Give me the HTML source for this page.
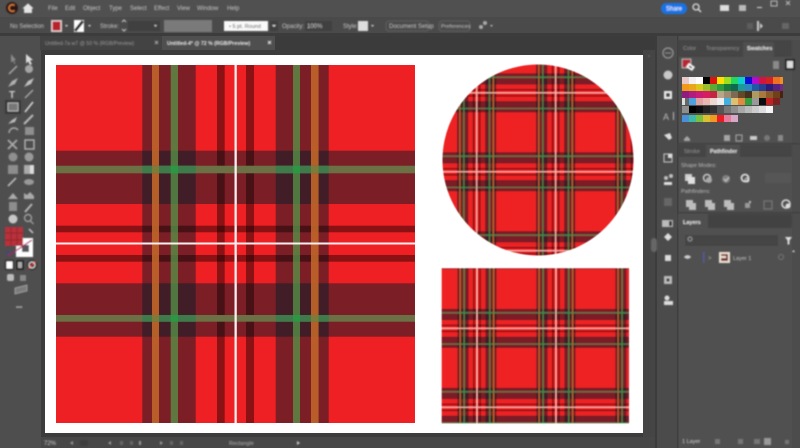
<!DOCTYPE html>
<html><head><meta charset="utf-8"><style>
html,body{margin:0;padding:0;background:#4a4a4a;width:800px;height:448px;overflow:hidden}
svg{display:block}
text{font-family:"Liberation Sans",sans-serif;font-size:6px;fill:#c8c8c8}
</style></head><body>
<svg width="800" height="448" viewBox="0 0 800 448" xmlns="http://www.w3.org/2000/svg">
<defs>
<filter id="b" x="-5%" y="-5%" width="110%" height="110%"><feGaussianBlur stdDeviation="0.7"/></filter>
<filter id="b2" x="-5%" y="-5%" width="110%" height="110%"><feGaussianBlur stdDeviation="0.35"/></filter>
<filter id="b3" x="-5%" y="-5%" width="110%" height="110%"><feGaussianBlur stdDeviation="0.6"/></filter>
<g id="t">
<rect x="47.5" y="55.5" width="376" height="376" fill="#ee2024"/>
<g fill="rgb(0,29,42)" fill-opacity=".48">
<rect x="47.5" y="150.7" width="376" height="53.3"/><rect x="47.5" y="283.3" width="376" height="53.4"/>
<rect x="142.3" y="55.5" width="53.4" height="376"/><rect x="275.7" y="55.5" width="53" height="376"/>
</g>
<g fill="#000" fill-opacity=".42">
<rect x="217" y="55.5" width="7.7" height="376"/><rect x="246" y="55.5" width="8" height="376"/>
<rect x="47.5" y="225.7" width="376" height="6.6"/><rect x="47.5" y="255" width="376" height="6.7"/>
</g>
<g fill="rgb(87,150,73)" fill-opacity=".75">
<rect x="170.7" y="55.5" width="7.3" height="376"/><rect x="293" y="55.5" width="7" height="376"/>
</g>
<g fill="rgb(190,100,40)" fill-opacity=".92">
<rect x="152" y="55.5" width="7" height="376"/><rect x="311" y="55.5" width="7.6" height="376"/>
</g>
<g fill="#6b7045">
<rect x="47.5" y="165.7" width="376" height="7.6"/><rect x="47.5" y="315" width="376" height="6.7"/>
</g>
<g fill="#3f7a4a">
<rect x="142.3" y="165.7" width="53.4" height="7.6"/><rect x="275.7" y="165.7" width="53" height="7.6"/>
<rect x="142.3" y="315" width="53.4" height="6.7"/><rect x="275.7" y="315" width="53" height="6.7"/>
</g>
<g fill="#7f7a3a">
<rect x="152" y="165.7" width="7" height="7.6"/><rect x="311" y="165.7" width="7.6" height="7.6"/>
<rect x="152" y="315" width="7" height="6.7"/><rect x="311" y="315" width="7.6" height="6.7"/>
</g>
<g fill="#2c9644">
<rect x="170.7" y="165.7" width="7.3" height="7.6"/><rect x="293" y="165.7" width="7" height="7.6"/>
<rect x="170.7" y="315" width="7.3" height="6.7"/><rect x="293" y="315" width="7" height="6.7"/>
</g>
</g>
<g id="tl">
<use href="#t"/>
<rect x="233" y="55.5" width="5" height="376" fill="#f6c2ba"/>
<rect x="47.5" y="241" width="376" height="5" fill="#f6c2ba"/>
</g>
<pattern id="p1" patternUnits="userSpaceOnUse" x="0" y="0" width="376" height="376" patternTransform="translate(437.2 132.26) scale(.21)"><g transform="translate(-47.5 -55.5)"><use href="#tl"/></g></pattern>
<pattern id="p2" patternUnits="userSpaceOnUse" x="0" y="0" width="376" height="376" patternTransform="translate(437.5 288.86) scale(.21)"><g transform="translate(-47.5 -55.5)"><use href="#tl"/></g></pattern>
<clipPath id="cm"><rect x="56" y="65" width="359" height="358"/></clipPath>
</defs>

<!-- chrome -->
<rect width="800" height="448" fill="#4a4a4a"/>
<rect x="0" y="0" width="800" height="17" fill="#505050"/>
<rect x="0" y="17" width="800" height="18" fill="#4a4a4a"/>
<rect x="0" y="33" width="800" height="3" fill="#3c3c3c"/>
<rect x="41" y="36" width="614" height="401" fill="#3c3c3c"/>
<rect x="0" y="36" width="41" height="412" fill="#4e4e4e"/>
<rect x="41" y="36" width="614" height="14" fill="#3b3b3b"/>
<rect x="162" y="36" width="113" height="14" fill="#4f4f4f"/>
<rect x="40" y="36" width="122" height="14" fill="#434343"/>
<rect x="41" y="437" width="614" height="11" fill="#474747"/>
<rect x="643" y="50" width="12" height="387" fill="#454545"/>
<rect x="655" y="36" width="23" height="412" fill="#4b4b4b"/>
<rect x="678" y="36" width="122" height="412" fill="#505050"/>
<rect x="655" y="36" width="2" height="412" fill="#3c3c3c"/>
<rect x="677" y="36" width="1.5" height="412" fill="#3e3e3e"/>
<rect x="792" y="40" width="8" height="408" fill="#4c4c4c"/>

<!-- artboard -->
<rect x="45" y="55" width="598" height="378" fill="#fff"/>
<g clip-path="url(#cm)">
<use href="#t"/>
<rect x="234.5" y="55" width="2.3" height="376" fill="#fbeeee"/>
<rect x="47" y="242.5" width="376" height="2" fill="#fbeeee"/>
</g>
<circle cx="538" cy="160" r="95.5" fill="url(#p1)" filter="url(#b3)"/>
<rect x="441.7" y="268.3" width="187.3" height="155" fill="url(#p2)" filter="url(#b3)"/>

<!-- UI -->
<g filter="url(#b)">
<!-- title bar -->
<circle cx="12" cy="8" r="6" fill="#2a1512"/><path d="M14.5 5.5a3.3 3.3 0 1 0 0 5" fill="none" stroke="#e8833a" stroke-width="1.3"/>
<path d="M23 8.5l5-4.5 5 4.5M24.5 8v4.5h7V8z" fill="#e4e4e4" stroke="#e4e4e4" stroke-width=".9"/>
<text x="48" y="10">File</text><text x="65" y="10">Edit</text><text x="83" y="10">Object</text><text x="109" y="10">Type</text><text x="130" y="10">Select</text><text x="154" y="10">Effect</text><text x="177" y="10">View</text><text x="197" y="10">Window</text><text x="227" y="10">Help</text>
<rect x="661" y="3" width="26" height="11" rx="5.5" fill="#1473e6"/><text x="666" y="10.5" fill="#fff" style="fill:#fff">Share</text>
<circle cx="696" cy="7" r="3" fill="none" stroke="#ddd" stroke-width="1.3"/><path d="M698 9l3 3" stroke="#ddd" stroke-width="1.4"/>
<rect x="720" y="5" width="9" height="6" fill="#ddd"/><rect x="739" y="5" width="7" height="6" fill="#bbb"/><rect x="757" y="7" width="5" height="1" fill="#ddd"/><rect x="771" y="1" width="6" height="5" fill="none" stroke="#bbb"/><path d="M786 1l4 4m0-4l-4 4" stroke="#bbb"/>

<!-- control bar -->
<text x="10" y="28">No Selection</text>
<rect x="51" y="20" width="11" height="12" fill="#e9d4d4"/><rect x="52.5" y="21.5" width="8" height="9" fill="#b8222c"/>
<path d="M65 25h3l-1.500 2z" fill="#ddd"/>
<rect x="74" y="20" width="10" height="12" fill="#fff"/><path d="M75 31l8-10" stroke="#222" stroke-width="3"/>
<path d="M88 25h3l-1.500 2z" fill="#ddd"/>
<text x="100" y="28">Stroke:</text>
<rect x="128" y="21" width="32" height="10" fill="#404040"/>
<path d="M154 25h3l-1.500 2z" fill="#ccc"/>
<path d="M122 22l2-2 2 2M122 29l2 2 2-2" stroke="#ccc" fill="none"/>
<rect x="164" y="20" width="48" height="12" fill="#7a7a7a"/>
<rect x="224" y="21" width="44" height="10" fill="#fafafa"/><text x="229" y="28" style="fill:#333;font-size:5.500px">• 5 pt. Round</text>
<rect x="270" y="21" width="8" height="10" fill="#3f3f3f"/><path d="M272 25h4l-2 2z" fill="#ddd"/>
<text x="282" y="28">Opacity:</text><rect x="305" y="21" width="27" height="10" fill="#404040"/><text x="307" y="28">100%</text>
<text x="343" y="28">Style:</text><rect x="358" y="21" width="10" height="10" fill="#dedede"/><path d="M371 25h3l-1.500 2z" fill="#ddd"/>
<rect x="386" y="21" width="43" height="10" rx="3" fill="none" stroke="#666" stroke-width=".8"/><text x="389" y="28">Document Setup</text>
<rect x="439" y="21" width="31" height="10" rx="3" fill="none" stroke="#666" stroke-width=".8"/><text x="441" y="28" style="font-size:5.500px">Preferences</text>
<circle cx="481" cy="27" r="2" fill="#aaa"/><circle cx="485" cy="23" r="2" fill="#aaa"/><path d="M490 25h3l-1.500 2z" fill="#bbb"/>
<rect x="747" y="23" width="6" height="6" fill="#5c5c5c"/><rect x="757" y="21" width="2" height="10" fill="#ccc"/><path d="M760 23l3 3-3 3z" fill="#ccc"/><rect x="782" y="23" width="7" height="6" fill="#666"/>

<!-- tabs -->
<text x="45" y="45" style="font-size:5.200px;fill:#9d9d9d">Untitled-7a w7 @ 50 % (RGB/Preview)</text><path d="M155 40l3 3m0-3l-3 3" stroke="#aaa" transform="translate(0,1)"/>
<text x="167" y="45" style="font-size:5.200px;fill:#efefef;font-weight:bold">Untitled-4* @ 72 % (RGB/Preview)</text><path d="M268 40l3 3m0-3l-3 3" stroke="#eee" transform="translate(0,1)"/>

<!-- left tools -->
<g fill="#bdbdbd" stroke="none">
<path d="M11 54l5 6-2 .5 1.500 3-1 .5-1.500-3-2 1.500z" fill="#8a8a8a"/><path d="M26 54l7 6-3 .5 2 3.500-2 1-2-3.500-2 2z" fill="#dcdcdc"/>
<path d="M9 74l8-8" stroke="#aaa" stroke-width="1.500"/><circle cx="29" cy="69" r="4" fill="#a5a5a5"/>
<path d="M8 87l4-6 6-3-3 6z" fill="#b0b0b0"/><path d="M24 87l4-6 6-3-3 6z" fill="#c0c0c0"/>
<text x="9" y="98" style="font-size:10px;font-weight:bold;fill:#cfcfcf">T</text><path d="M25 98l8-8" stroke="#bbb" stroke-width="1.200"/>
<rect x="5" y="100" width="16" height="14" fill="#393939"/><rect x="8" y="103" width="10" height="8" fill="#777" stroke="#ccc" stroke-width=".8"/><path d="M25 112l8-10" stroke="#ddd" stroke-width="1.500"/>
<path d="M8 124l4-4 5-3-2 5z" fill="#bbb"/><path d="M24 124l9-9" stroke="#bbb" stroke-width="2"/>
<path d="M9 133a5 5 0 0 1 9-3" fill="none" stroke="#aaa" stroke-width="1.500"/><rect x="25" y="127" width="9" height="8" fill="#8f8f8f"/>
<path d="M8 149l9-9m-9 0l9 9" stroke="#aaa" stroke-width="1.800"/><rect x="25" y="140" width="9" height="9" fill="none" stroke="#bbb" stroke-width="1.300"/>
<circle cx="13" cy="157" r="4.500" fill="#8f8f8f"/><circle cx="29" cy="157" r="4.500" fill="#999"/>
<rect x="8" y="165" width="10" height="9" fill="#8d8d8d"/><rect x="24" y="165" width="10" height="9" fill="#aaa"/><rect x="30" y="165" width="4" height="9" fill="#ddd"/>
<path d="M8 186l8-8" stroke="#bbb" stroke-width="1.600"/><ellipse cx="29" cy="182" rx="5" ry="3" fill="#999"/>
<path d="M8 199l5-6 5 6z" fill="#aaa"/><path d="M24 199v-6l3 2 3-3 4 4v3z" fill="#aaa"/>
<rect x="9" y="202" width="8" height="9" fill="#8e8e8e"/><path d="M25 212l7-8" stroke="#bbb" stroke-width="1.800"/>
<circle cx="13" cy="219" r="4.500" fill="#c8c8c8"/><circle cx="28" cy="218" r="3.500" fill="none" stroke="#aaa" stroke-width="1.200"/><path d="M30.500 221l3 3" stroke="#aaa" stroke-width="1.200"/>
</g>
<path d="M29 229l4 4" stroke="#ccc" stroke-width="1.500"/>
<rect x="16" y="238" width="17" height="19" fill="#fff"/>
<rect x="22" y="245" width="7" height="7" fill="#555"/>
<rect x="5" y="227" width="18" height="19" fill="#b7303b"/>
<path d="M5 233h18M5 240h18M11 227v19M17 227v19" stroke="#8e1d28" stroke-width=".7"/>
<path d="M8 256l24-16" stroke="#a3246f" stroke-width="1.300"/>
<rect x="6" y="251" width="3" height="3" fill="#448"/>
<rect x="5" y="260" width="9" height="10" rx="1.500" fill="#222"/><rect x="6.500" y="261.500" width="6" height="7" fill="#fff"/>
<rect x="16" y="260" width="8" height="10" rx="1.500" fill="#222"/><rect x="18" y="262" width="4" height="6" fill="#aaa"/>
<circle cx="32" cy="265" r="5" fill="#222"/><path d="M28.500 268.500l7-7" stroke="#e33" stroke-width="1.500"/><circle cx="32" cy="265" r="3" fill="none" stroke="#eee" stroke-width="1"/>
<rect x="7" y="274" width="7" height="7" rx="2" fill="#bbb"/><rect x="20" y="275" width="6" height="6" fill="#888"/>
<path d="M15 288l12-3v6l-12 3z" fill="#7c7c7c" stroke="#aaa" stroke-width=".8"/>
<text x="16" y="309" style="font-size:6px;fill:#bbb;font-weight:bold">•••</text>

<!-- dock -->
<g fill="#c0c0c0">
<circle cx="668" cy="53" r="5" fill="none" stroke="#999" stroke-width="1.200"/><path d="M665 53h6" stroke="#999"/>
<circle cx="668" cy="75" r="4.500" fill="#c8c8c8"/>
<rect x="664" y="91" width="8" height="8" fill="#eee"/><rect x="666" y="93" width="4" height="4" fill="#444"/>
<text x="663" y="120" style="font-size:9px;fill:#bbb">A</text><rect x="673" y="112" width="1" height="8"/>
<path d="M664 135l6-2 2 5-3 2z" fill="#ddd"/>
<rect x="664" y="154" width="8" height="8" fill="none" stroke="#ccc"/><rect x="668" y="154" width="4" height="4" fill="#ddd"/>
<circle cx="666" cy="178" r="2"/><circle cx="671" cy="176" r="2"/><path d="M664 182h8v3h-8z" fill="#e0e0e0"/>
<rect x="664" y="198" width="8" height="8" fill="#666"/>
<rect x="662" y="220" width="11" height="7" fill="#bbb"/><rect x="669" y="221" width="3" height="5" fill="#333"/>
<path d="M668 233l4 4-4 4-4-4z" fill="#ddd"/>
<rect x="665" y="255" width="6" height="6" fill="#ddd"/>
<rect x="664" y="276" width="8" height="8" fill="#bbb"/><rect x="666.500" y="278.500" width="3" height="3" fill="#333"/>
<circle cx="667" cy="298" r="2.500" fill="#ddd"/><rect x="664" y="301" width="9" height="4" fill="#ddd"/>
</g>
<rect x="651" y="238" width="6" height="14" rx="3" fill="#666"/>
<circle cx="649" cy="56" r="0.800" fill="#777"/>

<!-- panel tabs -->
<rect x="678" y="40" width="114" height="17" fill="#454545"/>
<rect x="743" y="42" width="31" height="15" rx="2" fill="#505050"/>
<text x="683" y="50" style="fill:#8f8f8f;font-size:5.500px">Color</text><text x="706" y="50" style="fill:#8f8f8f;font-size:5.500px">Transparency</text><text x="747" y="50" style="fill:#e5e5e5;font-size:5.500px;font-weight:bold">Swatches</text>
<!-- swatch header -->
<rect x="682" y="59" width="9" height="9" fill="#b72730" stroke="#ddd" stroke-width=".7"/>
<path d="M689 63l6 4-3 4-6-4z" fill="#fff"/><path d="M689 66l3 2" stroke="#222" stroke-width="1.500"/>
<rect x="773" y="61" width="6" height="8" fill="#8a8a8a"/>
<rect x="785" y="59" width="10" height="11" rx="1" fill="#222"/><rect x="787" y="61" width="6" height="7" fill="#ddd"/>
</g>

<!-- swatches -->
<g filter="url(#b2)" shape-rendering="crispEdges">
<g transform="translate(682,77)">
<rect x="0" width="7" height="7" fill="#e9c8c8"/><rect x="7" width="7" height="7" fill="#f2f2f2"/><rect x="14" width="7" height="7" fill="#fff"/><rect x="21" width="7" height="7" fill="#000"/><rect x="28" width="7" height="7" fill="#d9140f"/><rect x="35" width="7" height="7" fill="#ffe000"/><rect x="42" width="7" height="7" fill="#9be01a"/><rect x="49" width="7" height="7" fill="#21d860"/><rect x="56" width="7" height="7" fill="#10cfd0"/><rect x="63" width="7" height="7" fill="#1010d8"/><rect x="70" width="7" height="7" fill="#b010d0"/><rect x="77" width="7" height="7" fill="#d01440"/><rect x="84" width="7" height="7" fill="#d42020"/><rect x="91" width="7" height="7" fill="#ee7020"/><rect x="98" width="3" height="7" fill="#ee9020"/>
</g>
<g transform="translate(682,84)">
<rect x="0" width="7" height="7" fill="#f09a1f"/><rect x="7" width="7" height="7" fill="#e9a81f"/><rect x="14" width="7" height="7" fill="#d8c81c"/><rect x="21" width="7" height="7" fill="#9abf2c"/><rect x="28" width="7" height="7" fill="#5cab34"/><rect x="35" width="7" height="7" fill="#2f9b3e"/><rect x="42" width="7" height="7" fill="#167a3a"/><rect x="49" width="7" height="7" fill="#0e6a50"/><rect x="56" width="7" height="7" fill="#1e9a9a"/><rect x="63" width="7" height="7" fill="#2a85c0"/><rect x="70" width="7" height="7" fill="#1f5aa8"/><rect x="77" width="7" height="7" fill="#2a3d90"/><rect x="84" width="7" height="7" fill="#2a1e78"/><rect x="91" width="7" height="7" fill="#55247f"/><rect x="98" width="3" height="7" fill="#702a80"/>
</g>
<g transform="translate(682,91)">
<rect x="0" width="7" height="7" fill="#8f1f7f"/><rect x="7" width="7" height="7" fill="#b01a80"/><rect x="14" width="7" height="7" fill="#c81a78"/><rect x="21" width="7" height="7" fill="#d81a60"/><rect x="28" width="7" height="7" fill="#c22840"/><rect x="35" width="7" height="7" fill="#b9a58a"/><rect x="42" width="7" height="7" fill="#9f8a72"/><rect x="49" width="7" height="7" fill="#7c6a52"/><rect x="56" width="7" height="7" fill="#62482c"/><rect x="63" width="7" height="7" fill="#4a321c"/><rect x="70" width="7" height="7" fill="#b09a60"/><rect x="77" width="7" height="7" fill="#a87a3c"/><rect x="84" width="7" height="7" fill="#8a5a2a"/><rect x="91" width="7" height="7" fill="#6f4018"/><rect x="98" width="3" height="7" fill="#4a2410"/>
</g>
<g transform="translate(682,98)">
<rect x="0" width="3" height="7" fill="#ddd"/><rect x="3" width="4" height="7" fill="#666"/><rect x="7" width="7" height="7" fill="#4da0e0"/><rect x="14" width="7" height="7" fill="#e0a0a0"/><rect x="21" width="7" height="7" fill="#e8b8b0"/><rect x="28" width="7" height="7" fill="#f0d8d0"/><rect x="35" width="7" height="7" fill="#eee"/><rect x="42" width="7" height="7" fill="#40b0e0"/><rect x="49" width="7" height="7" fill="#e0c070"/><rect x="56" width="7" height="7" fill="#e08a40"/><rect x="63" width="7" height="7" fill="#30a040"/><rect x="70" width="7" height="7" fill="#999"/><rect x="77" width="7" height="7" fill="#111"/><rect x="84" width="7" height="7" fill="#c02020"/><rect x="91" width="7" height="7" fill="#7a2020"/>
</g>
<g transform="translate(682,106)">
<rect x="0" width="7" height="7" fill="#8e8e8e"/><rect x="7" width="7" height="7" fill="#000"/><rect x="14" width="7" height="7" fill="#111"/><rect x="21" width="7" height="7" fill="#222"/><rect x="28" width="7" height="7" fill="#333"/><rect x="35" width="7" height="7" fill="#555"/><rect x="42" width="7" height="7" fill="#777"/><rect x="49" width="7" height="7" fill="#8e8e8e"/><rect x="56" width="7" height="7" fill="#a8a8a8"/><rect x="63" width="7" height="7" fill="#bbb"/><rect x="70" width="7" height="7" fill="#ccc"/><rect x="77" width="7" height="7" fill="#ddd"/><rect x="84" width="7" height="7" fill="#f5f5f5"/>
</g>
<g transform="translate(682,115)">
<rect x="0" width="7" height="7" fill="#4a90d8"/><rect x="7" width="7" height="7" fill="#3fb8a8"/><rect x="14" width="7" height="7" fill="#78c040"/><rect x="21" width="7" height="7" fill="#d8c030"/><rect x="28" width="7" height="7" fill="#f09a20"/><rect x="35" width="7" height="7" fill="#e81c24"/><rect x="42" width="7" height="7" fill="#e87a9a"/><rect x="49" width="7" height="7" fill="#d8a8c8"/>
</g>
</g>

<g filter="url(#b)">
<!-- swatch footer -->
<g fill="#a5a5a5">
<path d="M684 139l3-3 3 3v2h-6z"/><rect x="724" y="135" width="6" height="6"/><rect x="736" y="135" width="6" height="6" fill="none" stroke="#aaa"/><rect x="750" y="136" width="7" height="4" fill="#ccc"/><circle cx="767" cy="138" r="3" fill="#777"/><rect x="778" y="135" width="5" height="6" fill="#888"/>
</g>
<rect x="678" y="143" width="122" height="1.500" fill="#3f3f3f"/>
<!-- pathfinder -->
<rect x="678" y="145" width="114" height="12" fill="#454545"/>
<rect x="706" y="145" width="34" height="12" fill="#505050"/>
<text x="684" y="153" style="fill:#8f8f8f;font-size:5.500px">Stroke</text><text x="710" y="153" style="fill:#e5e5e5;font-size:5.500px;font-weight:bold">Pathfinder</text>
<text x="681" y="167" style="fill:#bcbcbc;font-size:5.500px">Shape Modes:</text>
<g fill="#cfcfcf">
<rect x="685" y="174" width="7" height="7"/><rect x="688" y="177" width="7" height="7" fill="#e0e0e0"/>
<circle cx="707" cy="178" r="3.500" fill="none" stroke="#ccc" stroke-width="1.500"/><circle cx="709" cy="180" r="3" fill="#aaa"/>
<circle cx="726" cy="179" r="4" fill="#808080"/><path d="M724 179l2 2 3-4" stroke="#ccc" fill="none"/>
<circle cx="745" cy="178" r="3.500" fill="none" stroke="#ddd" stroke-width="1.800"/><circle cx="747" cy="180" r="2" fill="none" stroke="#ddd"/>
</g>
<rect x="765" y="173" width="26" height="10" rx="2" fill="#565656"/>
<text x="681" y="193" style="fill:#bcbcbc;font-size:5.500px">Pathfinders:</text>
<g fill="#bdbdbd">
<rect x="686" y="200" width="7" height="7"/><rect x="689" y="203" width="7" height="7"/>
<rect x="705" y="200" width="7" height="7"/><rect x="708" y="203" width="7" height="7"/>
<rect x="724" y="200" width="7" height="7"/><rect x="727" y="203" width="7" height="7"/>
<rect x="745" y="203" width="5" height="5" fill="#999"/><rect x="749" y="201" width="2" height="2"/>
<rect x="764" y="201" width="8" height="8" fill="none" stroke="#777" stroke-width="1.200"/>
<circle cx="786" cy="204" r="4" fill="none" stroke="#ddd" stroke-width="1.500"/><circle cx="788" cy="206" r="2.500" fill="#ddd"/>
</g>
<rect x="678" y="212" width="122" height="1.500" fill="#3f3f3f"/>
<!-- layers -->
<rect x="678" y="214" width="114" height="14" fill="#424242"/>
<rect x="678" y="214" width="30" height="14" fill="#505050"/>
<text x="683" y="224" style="fill:#e5e5e5;font-size:5.500px;font-weight:bold">Layers</text>
<rect x="685" y="235" width="93" height="11" fill="#454545"/>
<circle cx="690" cy="239" r="2" fill="none" stroke="#999"/>
<path d="M785 237h7l-2.500 3.500v4h-2v-4z" fill="#ddd"/>
<path d="M684 257c2-2.500 5-2.500 7 0-2 2.500-5 2.500-7 0z" fill="#ccc"/>
<rect x="703" y="252" width="1.500" height="11" fill="#5558a8"/>
<text x="708" y="260" style="fill:#aaa;font-size:6px">&gt;</text>
<rect x="719" y="252" width="11" height="11" fill="#f0e6d8"/><rect x="721" y="254" width="7" height="7" fill="#7a3030"/><rect x="720" y="256" width="6" height="2" fill="#f0e6d8"/>
<text x="733" y="260" style="fill:#c8c8c8;font-size:5.500px">Layer 1</text>
<circle cx="781" cy="257" r="2.500" fill="none" stroke="#777"/>
<path d="M792 252l1.500-2 1.500 2z" fill="#ddd"/>
<!-- footer -->
<text x="682" y="443" style="fill:#d8d8d8;font-size:5.500px">1 Layer</text>
<g fill="#777"><rect x="715" y="439" width="5" height="5"/><rect x="738" y="439" width="5" height="5"/><rect x="754" y="439" width="6" height="5"/><rect x="785" y="440" width="4" height="4"/></g>
<rect x="764" y="438" width="7" height="7" fill="#999"/>
<!-- status bar -->
<text x="44" y="445" style="fill:#d0d0d0;font-size:6px">72%</text>
<g fill="#9a9a9a"><path d="M70 443l3-2v4z"/><rect x="80" y="440" width="8" height="6" fill="#3d3d3d"/><path d="M108 443l3-2v4z"/><rect x="120" y="441" width="3" height="4" fill="#666"/><rect x="130" y="441" width="3" height="4" fill="#666"/><rect x="139" y="441" width="2" height="4"/><path d="M160 441l3 2-3 2z"/><rect x="170" y="441" width="3" height="4" fill="#666"/><rect x="180" y="441" width="3" height="4" fill="#666"/></g>
<text x="229" y="445" style="fill:#b5b5b5;font-size:5.500px">Rectangle</text>
<path d="M297 441l3 2-3 2z" fill="#ccc"/>
</g>
</svg>
</body></html>
